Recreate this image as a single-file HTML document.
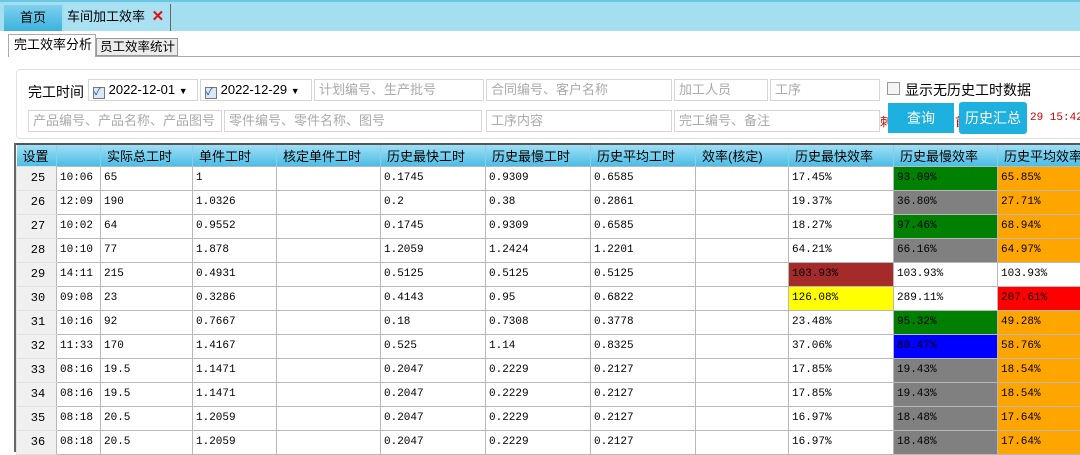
<!DOCTYPE html><html><head><meta charset="utf-8"><style>
*{margin:0;padding:0;box-sizing:border-box}
body{width:1080px;height:452px;overflow:hidden;background:#fff;font-family:"Liberation Sans","Noto Sans CJK SC",sans-serif;font-size:13px;color:#000;position:relative}
.a{position:absolute;white-space:nowrap}
.inp{position:absolute;height:22px;border:1px solid #d6d6d6;background:#fff;color:#aaa;font-size:13px;line-height:20px;padding-left:4px;white-space:nowrap;overflow:hidden}
table{position:absolute;left:16px;top:145px;width:1070px;border-collapse:collapse;table-layout:fixed;font-family:"Liberation Mono","Noto Sans CJK SC",monospace;font-size:11px}
th{height:21px;background:linear-gradient(#9fdff5,#4bbde6);font-weight:normal;font-family:"Liberation Sans","Noto Sans CJK SC",sans-serif;font-size:13px;border-right:1px solid #8ccde6;text-align:left;padding-left:6px;white-space:nowrap;overflow:hidden}
td{height:24px;border:1px solid #b8b8b8;padding-left:3px;white-space:nowrap;overflow:hidden}
td.n{background:#f0f0f0;text-align:center;border-color:#e0e0e0;border-right:1px solid #b8b8b8;font-size:12px}
.g{background:#008000}.gr{background:#808080}.o{background:#ffa500}.r{background:#a52a2a}.y{background:#ffff00}.rr{background:#ff0000}.b{background:#0000ff}
</style></head><body>
<div class="a" style="left:0;top:0;width:1080px;height:31px;background:#a4dff0;border-top:2px solid #6cc7e4"></div>
<div class="a" style="left:4px;top:5px;width:58px;height:26px;background:linear-gradient(#7fd0ee,#3cb2dd);text-align:center;line-height:26px;font-size:13px">首页</div>
<div class="a" style="left:64px;top:4px;width:107px;height:27px;background:#a9e0f2;border-right:1px solid #666;line-height:26px;padding-left:3px;font-size:13px">车间加工效率 <span style="color:#e01010;font-weight:bold;font-size:15px;margin-left:3px">✕</span></div>
<div class="a" style="left:8px;top:34px;width:88px;height:23px;border:1px solid #aaa;border-bottom:none;background:#fff;line-height:20px;padding-left:5px;font-size:13px;z-index:2">完工效率分析</div>
<div class="a" style="left:96px;top:38px;width:82px;height:18px;border:1px solid #999;background:#ececec;line-height:16px;padding-left:3px;font-size:12.5px">员工效率统计</div>
<div class="a" style="left:8px;top:56px;width:1072px;height:1px;background:#aaa"></div>
<div class="a" style="left:16px;top:69px;width:1070px;height:70px;border:1px solid #e0e0e0;border-radius:4px"></div>
<div class="a" style="left:28px;top:82px;font-size:14px">完工时间</div>
<div class="inp" style="left:88px;top:79px;width:110px;color:#000"><span style="display:inline-block;width:12px;height:12px;border:1px solid #777;background:#dbe9f7;color:#1a3ea8;font-size:10px;line-height:10px;vertical-align:-1px">✓</span> 2022-12-01 <span style="font-size:9px">▼</span></div>
<div class="inp" style="left:200px;top:79px;width:112px;color:#000"><span style="display:inline-block;width:12px;height:12px;border:1px solid #777;background:#dbe9f7;color:#1a3ea8;font-size:10px;line-height:10px;vertical-align:-1px">✓</span> 2022-12-29 <span style="font-size:9px">▼</span></div>
<div class="inp" style="left:314px;top:79px;width:170px">计划编号、生产批号</div>
<div class="inp" style="left:486px;top:79px;width:186px">合同编号、客户名称</div>
<div class="inp" style="left:674px;top:79px;width:94px">加工人员</div>
<div class="inp" style="left:770px;top:79px;width:110px">工序</div>
<div class="a" style="left:887px;top:82px;width:13px;height:13px;border:1px solid #999;background:#f4f4f4"></div>
<div class="a" style="left:905px;top:80px;font-size:14px">显示无历史工时数据</div>
<div class="inp" style="left:28px;top:110px;width:194px">产品编号、产品名称、产品图号</div>
<div class="inp" style="left:224px;top:110px;width:258px">零件编号、零件名称、图号</div>
<div class="inp" style="left:486px;top:110px;width:186px">工序内容</div>
<div class="inp" style="left:674px;top:110px;width:206px">完工编号、备注</div>
<div class="a" style="left:880px;top:113px;color:#c00;font-size:12px">刺</div>
<div class="a" style="left:888px;top:103px;width:66px;height:30px;background:#1eb0de;color:#fff;font-size:14px;text-align:center;line-height:30px">查询</div>
<div class="a" style="left:955px;top:113px;color:#c00;font-size:12px">首</div>
<div class="a" style="left:959px;top:102px;width:68px;height:32px;background:#1eb0de;color:#fff;font-size:14px;text-align:center;line-height:32px;border-radius:3px">历史汇总</div>
<div class="a" style="left:1030px;top:112px;color:#c00;font-size:11px;font-family:'Liberation Mono',monospace">29 15:42</div>
<div class="a" style="left:15px;top:143px;width:1065px;height:2px;background:#555"></div>
<div class="a" style="left:14px;top:143px;width:2px;height:309px;background:#666"></div>
<table>
<colgroup><col style="width:40px"><col style="width:44px"><col style="width:92px"><col style="width:84px"><col style="width:104px"><col style="width:105px"><col style="width:105px"><col style="width:105px"><col style="width:93px"><col style="width:105px"><col style="width:104px"><col style="width:89px"></colgroup>
<tr><th>设置</th><th></th><th>实际总工时</th><th>单件工时</th><th>核定单件工时</th><th>历史最快工时</th><th>历史最慢工时</th><th>历史平均工时</th><th>效率(核定)</th><th>历史最快效率</th><th>历史最慢效率</th><th>历史平均效率</th></tr>
<tr><td class="n">25</td><td>10:06</td><td>65</td><td>1</td><td></td><td>0.1745</td><td>0.9309</td><td>0.6585</td><td></td><td>17.45%</td><td class="g">93.09%</td><td class="o">65.85%</td></tr>
<tr><td class="n">26</td><td>12:09</td><td>190</td><td>1.0326</td><td></td><td>0.2</td><td>0.38</td><td>0.2861</td><td></td><td>19.37%</td><td class="gr">36.80%</td><td class="o">27.71%</td></tr>
<tr><td class="n">27</td><td>10:02</td><td>64</td><td>0.9552</td><td></td><td>0.1745</td><td>0.9309</td><td>0.6585</td><td></td><td>18.27%</td><td class="g">97.46%</td><td class="o">68.94%</td></tr>
<tr><td class="n">28</td><td>10:10</td><td>77</td><td>1.878</td><td></td><td>1.2059</td><td>1.2424</td><td>1.2201</td><td></td><td>64.21%</td><td class="gr">66.16%</td><td class="o">64.97%</td></tr>
<tr><td class="n">29</td><td>14:11</td><td>215</td><td>0.4931</td><td></td><td>0.5125</td><td>0.5125</td><td>0.5125</td><td></td><td class="r">103.93%</td><td>103.93%</td><td>103.93%</td></tr>
<tr><td class="n">30</td><td>09:08</td><td>23</td><td>0.3286</td><td></td><td>0.4143</td><td>0.95</td><td>0.6822</td><td></td><td class="y">126.08%</td><td>289.11%</td><td class="rr">207.61%</td></tr>
<tr><td class="n">31</td><td>10:16</td><td>92</td><td>0.7667</td><td></td><td>0.18</td><td>0.7308</td><td>0.3778</td><td></td><td>23.48%</td><td class="g">95.32%</td><td class="o">49.28%</td></tr>
<tr><td class="n">32</td><td>11:33</td><td>170</td><td>1.4167</td><td></td><td>0.525</td><td>1.14</td><td>0.8325</td><td></td><td>37.06%</td><td class="b">80.47%</td><td class="o">58.76%</td></tr>
<tr><td class="n">33</td><td>08:16</td><td>19.5</td><td>1.1471</td><td></td><td>0.2047</td><td>0.2229</td><td>0.2127</td><td></td><td>17.85%</td><td class="gr">19.43%</td><td class="o">18.54%</td></tr>
<tr><td class="n">34</td><td>08:16</td><td>19.5</td><td>1.1471</td><td></td><td>0.2047</td><td>0.2229</td><td>0.2127</td><td></td><td>17.85%</td><td class="gr">19.43%</td><td class="o">18.54%</td></tr>
<tr><td class="n">35</td><td>08:18</td><td>20.5</td><td>1.2059</td><td></td><td>0.2047</td><td>0.2229</td><td>0.2127</td><td></td><td>16.97%</td><td class="gr">18.48%</td><td class="o">17.64%</td></tr>
<tr><td class="n">36</td><td>08:18</td><td>20.5</td><td>1.2059</td><td></td><td>0.2047</td><td>0.2229</td><td>0.2127</td><td></td><td>16.97%</td><td class="gr">18.48%</td><td class="o">17.64%</td></tr>
</table>
</body></html>
